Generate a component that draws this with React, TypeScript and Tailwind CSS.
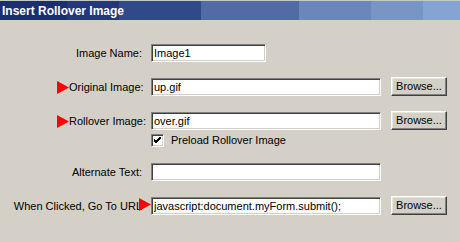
import type { ReactNode } from "react";

// classic win98-ish bevels
const SUNKEN =
  "border border-t-[#808080] border-l-[#808080] border-r-white border-b-white bg-white shadow-[inset_1px_1px_0_#404040,inset_-1px_-1px_0_#d4d0c8]";
const RAISED =
  "border border-t-white border-l-white border-r-[#404040] border-b-[#404040] bg-[#d4d0c8] shadow-[inset_-1px_-1px_0_#808080,inset_1px_1px_0_#e8e6e2]";

function Arrow() {
  return (
    <svg width="12" height="13" viewBox="0 0 12 13" className="shrink-0">
      <polygon points="0,0 12,6.5 0,13" fill="#ff0000" />
    </svg>
  );
}

function TextBox({ value = "", width }: { value?: string; width: string }) {
  return (
    <div className={`${SUNKEN} ${width} flex h-[18px] items-center overflow-hidden pl-[2px] leading-none`}>
      {value}
    </div>
  );
}

function Browse() {
  return (
    <div className={`${RAISED} ml-[10px] flex h-[19px] w-[56px] items-center justify-center leading-none`}>
      Browse...
    </div>
  );
}

function Row({
  label,
  arrow = false,
  children,
  className = "",
}: {
  label: string;
  arrow?: boolean;
  children: ReactNode;
  className?: string;
}) {
  return (
    <div className={`flex items-end ${className}`}>
      <div className="flex h-[18px] w-[142px] items-center">
        {arrow && (
          <div className="ml-[57px]">
            <Arrow />
          </div>
        )}
        <span className="flex-1 whitespace-nowrap text-right leading-none">{label}</span>
      </div>
      <div className="ml-[9px] flex items-end">{children}</div>
    </div>
  );
}

export default function App() {
  return (
    <div
      className="h-[242px] w-[460px] overflow-hidden bg-[#d4d0c8] text-[11px] text-black"
      style={{ fontFamily: '"Liberation Sans", Arial, sans-serif' }}
    >
      <div className="h-px bg-[#c8c8c8]" />
      <div className="flex h-[19px] items-center bg-[linear-gradient(90deg,#1b2e6e_0_67px,#22387a_67px_119px,#2e4a8a_119px_201px,#506ba5_201px_299px,#6987bc_299px_371px,#7796c6_371px_423px,#84a5d3_423px)] pl-[2px] text-[12px] font-bold text-white">
        Insert Rollover Image
      </div>

      <div className="flex flex-col">
        <Row label="Image Name:" className="mt-[24px]">
          <TextBox value="Image1" width="w-[115px]" />
        </Row>

        <Row label="Original Image:" arrow className="mt-[15px]">
          <TextBox value="up.gif" width="w-[230px]" />
          <Browse />
        </Row>

        <Row label="Rollover Image:" arrow className="mt-[15px]">
          <TextBox value="over.gif" width="w-[230px]" />
          <Browse />
        </Row>

        <div className="mt-[4px] flex h-[13px] items-center pl-[151px]">
          <div className={`${SUNKEN} flex h-[13px] w-[13px] items-center justify-center`}>
            <svg width="7" height="7" viewBox="0 0 7 7">
              <path d="M0 2 L2 4 L7 -1 M0 3 L2 5 L7 0 M0 4 L2 6 L7 1" stroke="#000" strokeWidth="1" fill="none" />
            </svg>
          </div>
          <span className="ml-[7px] leading-none">Preload Rollover Image</span>
        </div>

        <Row label="Alternate Text:" className="mt-[16px]">
          <TextBox width="w-[230px]" />
        </Row>

        <Row label="When Clicked, Go To URL" className="mt-[15px]">
          <div className="relative">
            <TextBox value="javascript:document.myForm.submit();" width="w-[230px]" />
            <div className="absolute left-[-12px] top-[1px]">
              <Arrow />
            </div>
          </div>
          <Browse />
        </Row>
      </div>
    </div>
  );
}
